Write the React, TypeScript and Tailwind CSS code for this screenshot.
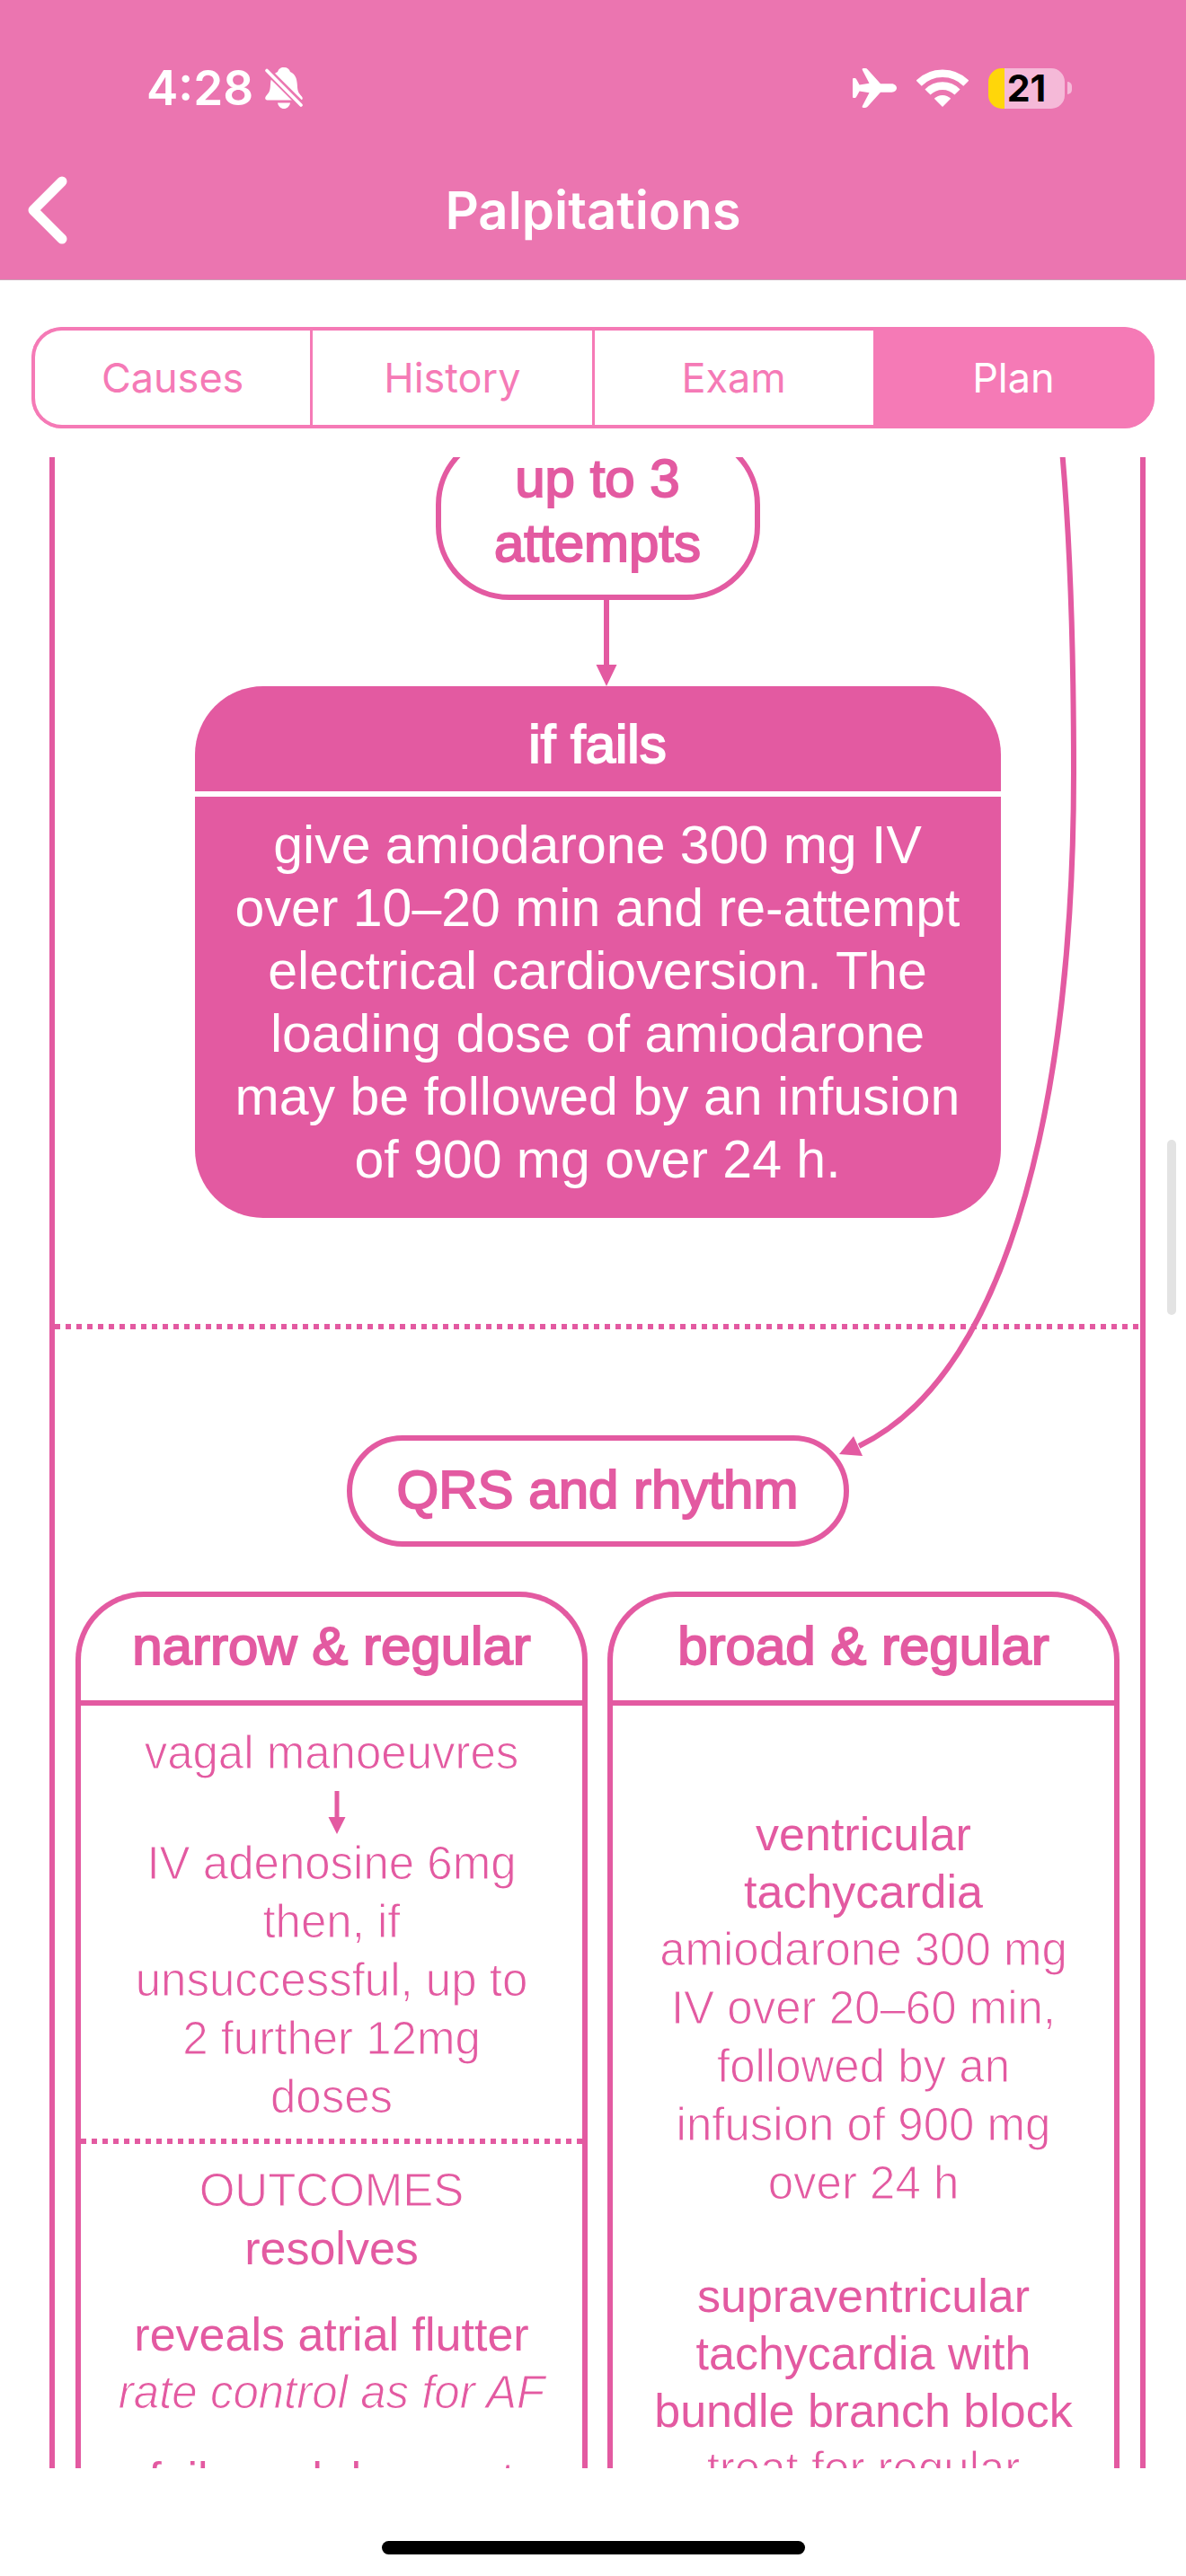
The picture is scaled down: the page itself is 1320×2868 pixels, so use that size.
import React, { useState } from "react";

const TABS = ["Causes", "History", "Exam", "Plan"];

function BellOffIcon() {
  return (
    <svg viewBox="0 0 42 46" className="h-[46px] w-[42px]" aria-label="Silent mode">
      <mask id="bell-gap" maskUnits="userSpaceOnUse" x="-4" y="-4" width="50" height="54">
        <rect x="-4" y="-4" width="50" height="54" fill="white" />
        <path d="M-4 -2.600L46 47.200" stroke="black" strokeWidth="8" />
      </mask>
      <g mask="url(#bell-gap)" fill="white">
        <path d="M21 0c4 0 6.200 2 7 5c5.500 2.500 7.500 7.500 7.800 14c.3 8 1.500 9.500 4.700 13c2 2 1.500 4.500-1 4.500H2.500C0 36.500-.5 34 1 32c3-3.500 4.700-5 5-13c.3-6.500 2.500-11.500 8-14C15 2 17 0 21 0z" />
        <path d="M14 39.500h14c-.8 4-3.500 6.500-7 6.500s-6.200-2.500-7-6.500z" />
      </g>
      <path d="M2 3.500L40 42" stroke="white" strokeWidth="3.600" strokeLinecap="round" />
    </svg>
  );
}

function PlaneIcon() {
  return (
    <svg viewBox="0 0 49 44" className="h-11 w-[49px]" fill="white" aria-label="Airplane mode">
      <path d="M31 17.300H43.500c3.200 0 5.500 2.500 5.500 4.700s-2.300 4.700-5.500 4.700H31L16.800 42.600q-1.200 1.400-2.800 1.400h-2q-2 0-1.300-1.800L18.500 27.200L7.600 25.600L4 32q-.6 1-1.500 1H1q-1 0-1-1V12q0-1 1-1h1.500q.9 0 1.500 1L7.600 18.400L18.500 16.800L10.700 1.800Q10 0 12 0h2q1.600 0 2.800 1.400z" />
    </svg>
  );
}

function WifiIcon() {
  return (
    <svg viewBox="0 0 58 42" className="h-[42px] w-[58px]" fill="none" stroke="white" strokeWidth="8.600" aria-label="Wi-Fi">
      <path d="M2.700 15.700A37.200 37.200 0 0 1 55.300 15.700" />
      <path d="M12.500 25.500A23.300 23.300 0 0 1 45.500 25.500" />
      <path d="M29 42L19.800 32.800A13 13 0 0 1 38.200 32.800Z" fill="white" stroke="none" />
    </svg>
  );
}

function Battery() {
  return (
    <div className="flex items-center gap-[3px]">
      <div className="flex h-[45px] w-[85px] items-center justify-center rounded-[15px] bg-linear-to-r from-[#ffd60a] from-[18px] to-[#f5b9d8] to-[18px]">
        <span className="text-[41px] leading-[45px] font-bold text-black">21</span>
      </div>
      <div className="h-[14px] w-[5px] rounded-r-full bg-[#f5b9d8]" />
    </div>
  );
}

function DottedRule() {
  return (
    <div className="h-[6px] bg-[repeating-linear-gradient(90deg,#e35aa1_0px,#e35aa1_6px,transparent_6px,transparent_12px)]" />
  );
}

type Weight = "light" | "regular" | "italic";

function Lines({ items, weight = "light" }: { items: string[]; weight?: Weight }) {
  const style = {
    light: "text-[51px] leading-[65px] [-webkit-text-stroke:1px_white]",
    italic: "text-[51px] leading-[65px] italic [-webkit-text-stroke:1px_white]",
    regular: "text-[52px] leading-[64px]",
  }[weight];
  return (
    <p className={`whitespace-nowrap ${style}`}>
      {items.map((t) => (
        <span key={t} className="block">
          {t}
        </span>
      ))}
    </p>
  );
}

function Column({ title, children }: { title: string; children: React.ReactNode }) {
  return (
    <section className="flex-1 rounded-t-[76px] border-x-[6px] border-t-[6px] border-[#e35aa1] text-center">
      <h2 className="border-b-[6px] border-[#e35aa1] pt-[19px] pb-6 text-[60px] leading-[72px] [-webkit-text-stroke:2px_#e35aa1]">
        {title}
      </h2>
      {children}
    </section>
  );
}

export default function App() {
  const [active, setActive] = useState("Plan");
  return (
    <div className="flex h-screen flex-col bg-white font-['Inter',sans-serif]">
      <header className="border-b border-[#c9a3b6] bg-[#eb75b0] text-white">
        <div className="flex h-[196px] items-center justify-between pr-[127px] pl-[163px]">
          <div className="flex items-center gap-[13px]">
            <span className="text-[53px] leading-[64px] font-semibold">4:28</span>
            <BellOffIcon />
          </div>
          <div className="flex items-center gap-[22px]">
            <PlaneIcon />
            <WifiIcon />
            <Battery />
          </div>
        </div>
        <div className="grid grid-cols-[1fr_auto_1fr] items-center pb-[39px]">
          <button type="button" aria-label="Back" className="ml-[31px] w-fit">
            <svg viewBox="0 0 44 76" className="h-[76px] w-11" fill="none" stroke="white" strokeWidth="11" strokeLinecap="round" strokeLinejoin="round">
              <path d="M38 6L6 38L38 70" />
            </svg>
          </button>
          <h1 className="text-[58px] leading-[72px] font-semibold">Palpitations</h1>
        </div>
      </header>

      <div
        role="tablist"
        className="mx-[35px] mt-[52px] mb-8 grid h-[113px] shrink-0 grid-cols-4 gap-[3px] overflow-hidden rounded-[34px] bg-[#f57ab6]"
      >
        {TABS.map((t) => (
          <button
            key={t}
            type="button"
            role="tab"
            aria-selected={t === active}
            onClick={() => setActive(t)}
            className={`border-y-4 border-[#f57ab6] text-[45px] first:rounded-l-[34px] first:border-l-4 last:rounded-r-[34px] last:border-r-4 ${
              t === active ? "bg-[#f57ab6] text-white" : "bg-white text-[#f57ab6]"
            }`}
          >
            {t}
          </button>
        ))}
      </div>

      <div className="relative min-h-0 flex-1">
        <main className="h-full overflow-hidden font-['Liberation_Sans',Arial,sans-serif] text-[#e35aa1]">
          <div className="relative -mt-[29px] mr-[45px] ml-[55px] border-x-[6px] border-[#e35aa1]">
            <svg
              viewBox="0 0 270 1180"
              className="absolute top-0 right-[67px] h-[1180px] w-[270px]"
              fill="none"
              aria-hidden="true"
            >
              <path
                d="M248 0C262 140 263 300 263 380C263 720 199 1045 24 1130"
                stroke="#e35aa1"
                strokeWidth="6"
              />
              <path d="M2 1139L18 1119L28 1141Z" fill="#e35aa1" />
            </svg>

            <div className="flex flex-col items-center">
              <div className="w-[361px] rounded-[82px] border-[6px] border-[#e35aa1] pt-[11px] pb-[21px] text-center text-[60px] leading-[72px] [-webkit-text-stroke:2px_#e35aa1]">
                up to 3<br />
                attempts
              </div>
              <svg viewBox="0 0 24 96" className="ml-5 h-[96px] w-6" fill="#e35aa1" aria-hidden="true">
                <path d="M9 0h6v72H23.500L12 96L.5 72H9z" />
              </svg>
              <section className="w-[897px] overflow-hidden rounded-[76px] bg-[#e35aa1] text-center text-white">
                <h2 className="border-b-[6px] border-white pt-[29px] pb-4 text-[60px] leading-[72px] [-webkit-text-stroke:2px_white]">
                  if fails
                </h2>
                <p className="px-9 pt-[19px] pb-[30px] text-[59px] leading-[70px]">
                  give amiodarone 300 mg IV over 10–20 min and re-attempt electrical cardioversion. The
                  loading dose of amiodarone may be followed by an infusion of 900 mg over 24 h.
                </p>
              </section>
            </div>

            <div className="my-[118px]">
              <DottedRule />
            </div>

            <div className="flex justify-center">
              <div className="w-[559px] rounded-full border-[6px] border-[#e35aa1] pt-[19px] pb-[21px] text-center text-[60px] leading-[72px] [-webkit-text-stroke:2px_#e35aa1]">
                QRS and rhythm
              </div>
            </div>

            <div className="mt-[50px] flex gap-[22px] px-[23px]">
              <Column title="narrow & regular">
                <div className="pt-5">
                  <Lines items={["vagal manoeuvres"]} />
                  <div className="flex justify-center pt-[10px] pl-3">
                    <svg viewBox="0 0 20 48" className="h-12 w-5" fill="#e35aa1" aria-hidden="true">
                      <path d="M7.500 0h5v29H19.500L10 48L.5 29H7.500z" />
                    </svg>
                  </div>
                  <Lines
                    items={["IV adenosine 6mg", "then, if", "unsuccessful, up to", "2 further 12mg", "doses"]}
                  />
                </div>
                <div className="mt-[14px] mb-[19px]">
                  <DottedRule />
                </div>
                <Lines items={["OUTCOMES"]} />
                <Lines items={["resolves"]} weight="regular" />
                <div className="h-8" />
                <Lines items={["reveals atrial flutter"]} weight="regular" />
                <Lines items={["rate control as for AF"]} weight="italic" />
                <div className="h-8" />
                <Lines items={["fails and does not"]} weight="regular" />
              </Column>
              <Column title="broad & regular">
                <div className="pt-[111px]">
                  <Lines items={["ventricular", "tachycardia"]} weight="regular" />
                  <Lines
                    items={[
                      "amiodarone 300 mg",
                      "IV over 20–60 min,",
                      "followed by an",
                      "infusion of 900 mg",
                      "over 24 h",
                    ]}
                  />
                  <div className="h-[61px]" />
                  <Lines
                    items={["supraventricular", "tachycardia with", "bundle branch block"]}
                    weight="regular"
                  />
                  <Lines items={["treat for regular"]} />
                </div>
              </Column>
            </div>
          </div>
        </main>
        <div className="absolute top-[760px] right-[11px] h-[195px] w-[10px] rounded-full bg-[#e3e3e3]" />
      </div>

      <footer className="flex h-[120px] shrink-0 items-end justify-center pb-6">
        <div className="h-[15px] w-[471px] rounded-full bg-black" />
      </footer>
    </div>
  );
}
